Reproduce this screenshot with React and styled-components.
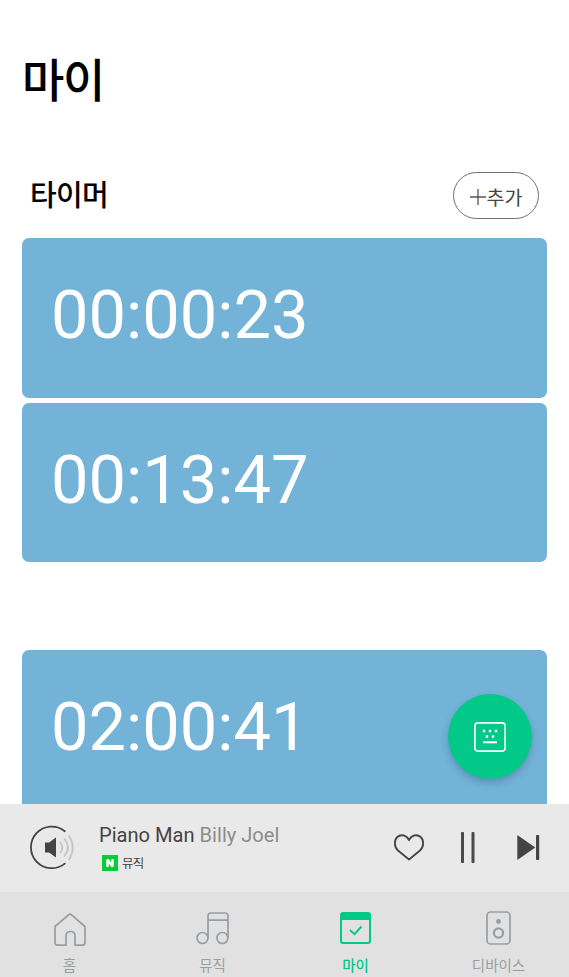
import React from "react";
import styled, { createGlobalStyle } from "styled-components";

const GlobalStyle = createGlobalStyle`
  * { box-sizing: border-box; }
  html, body { margin: 0; padding: 0; overflow: hidden; background: #fff; }
  button { border: 0; padding: 0; margin: 0; background: none; font: inherit; color: inherit; }
  svg { display: block; overflow: visible; }
`;

const Screen = styled.div`
  position: relative;
  display: flex;
  flex-direction: column;
  width: 569px;
  height: 977px;
  overflow: hidden;
  background: #fff;
  font-family: Roboto, "Noto Sans CJK KR", sans-serif;
`;

const Content = styled.main`
  height: 804px;
  overflow: hidden;
  padding: 0 22px;
`;

const PageTitle = styled.h1`
  margin: 43px 0 0;
  height: 68px;
  line-height: 68px;
  font-family: "Noto Sans CJK KR", sans-serif;
  font-size: 46px;
  font-weight: 500;
  letter-spacing: -1.2px;
  color: #000;
`;

const SectionHeader = styled.header`
  display: flex;
  align-items: center;
  justify-content: space-between;
  margin-top: 61px;
  height: 47px;
  padding: 0 8px 0 8px;
`;

const SectionTitle = styled.h2`
  margin: 0 0 5px;
  font-family: "Noto Sans CJK KR", sans-serif;
  font-size: 29px;
  line-height: 42px;
  font-weight: 500;
  letter-spacing: -0.7px;
  color: #000;
`;

const AddButton = styled.button`
  display: flex;
  align-items: center;
  justify-content: center;
  gap: 1px;
  width: 86px;
  height: 47px;
  padding-top: 3px;
  border: 1px solid #707070;
  border-radius: 24px;
  font-family: "Noto Sans CJK KR", sans-serif;
  font-size: 19.5px;
  line-height: 24px;
  letter-spacing: 0;
  color: #444;
`;

const TimerList = styled.div`
  display: flex;
  flex-direction: column;
  gap: 5px;
  margin-top: ${(p) => p.$gap}px;
`;

const TimerCard = styled.article`
  height: 159.5px;
  padding: 38px 29px 0;
  border-radius: 7px;
  background: #73b3d8;
  color: #fff;
  font-size: 66.8px;
  line-height: 79px;
`;

const Fab = styled.button`
  position: absolute;
  left: 448px;
  top: 694px;
  display: grid;
  place-items: center;
  width: 84px;
  height: 85px;
  border-radius: 50%;
  background: #03c988;
  box-shadow: 0 4px 7px rgba(40, 70, 110, 0.3);
`;

const Player = styled.section`
  display: flex;
  align-items: flex-start;
  height: 88px;
  padding: 0 29px 0 30px;
  background: #e9e9e9;
`;

const VolumeButton = styled.button`
  margin-top: 22px;
`;

const Track = styled.div`
  flex: 1;
  padding: 18px 0 0 25px;
`;

const TrackTitle = styled.div`
  font-size: 20.1px;
  line-height: 26px;
  white-space: nowrap;
  color: #444;
`;

const Artist = styled.span`
  color: #8c8c8c;
`;

const Source = styled.div`
  display: flex;
  align-items: center;
  gap: 4px;
  margin: 7px 0 0 3px;
  height: 16px;
  font-family: "Noto Sans CJK KR", sans-serif;
  font-size: 12.5px;
  line-height: 16px;
  letter-spacing: -0.8px;
  color: #444;
`;

const Controls = styled.div`
  display: flex;
  align-items: center;
  height: 87px;
`;

const ControlButton = styled.button`
  margin-left: ${(p) => p.$space}px;
`;

const TabBar = styled.nav`
  display: grid;
  grid-template-columns: repeat(4, 1fr);
  width: 572px;
  height: 85px;
  margin-left: -2px;
  background: #e1e1e1;
`;

const Tab = styled.button`
  display: flex;
  flex-direction: column;
  align-items: center;
  padding-top: 17px;
  color: ${(p) => (p.$active ? "#03c988" : "#999ea3")};
`;

const TabIcon = styled.span`
  display: grid;
  place-items: center;
  width: 36px;
  height: 38px;
`;

const TabLabel = styled.span`
  margin-top: 8px;
  font-family: "Noto Sans CJK KR", sans-serif;
  font-size: 14.5px;
  line-height: 20px;
  font-weight: ${(p) => (p.$active ? 500 : 400)};
`;

const PlusIcon = () => (
  <svg width="16" height="16" viewBox="0 0 16 16" fill="none" stroke="#555" strokeWidth="1.3">
    <path d="M8 0v16M0 8h16" />
  </svg>
);

const KeyboardIcon = () => (
  <svg width="32" height="30" viewBox="0 0 32 30" fill="none" stroke="#fff" strokeWidth="1.6">
    <rect x=".9" y=".9" width="30.2" height="28.2" rx="3" />
    <path d="M9 20.3h14" strokeWidth="2" />
    <g fill="#fff" stroke="none">
      <path d="M8.8 7.8h2.4v2.4H8.8zM14.8 7.8h2.4v2.4h-2.4zM20.8 7.8h2.4v2.4h-2.4zM11.8 13.3h2.4v2.4h-2.4zM17.8 13.3h2.4v2.4h-2.4z" />
    </g>
  </svg>
);

const VolumeIcon = () => (
  <svg width="44" height="44" viewBox="0 0 44 44" fill="none" strokeLinecap="round">
    <path d="M34.8 5.2A20.8 20.8 0 1 0 34.8 37.6" stroke="#444" strokeWidth="1.8" />
    <path d="M15 16.500h4l7-5v20l-7-5h-4z" fill="#444" />
    <g stroke="#c6c6c6" strokeWidth="1.8">
      <path d="M30.500 16.500q3.500 5 0 10" />
      <path d="M34.500 13q7 8.500 0 17" />
      <path d="M39 10q7.500 11.500 0 23.500" />
    </g>
  </svg>
);

const NaverMark = () => (
  <svg width="16" height="16" viewBox="0 0 16 16">
    <path fill="#02ce3c" d="M0 0h16v16H0z" />
    <path d="M5.500 12V4.500l5 7V4" fill="none" stroke="#fff" strokeWidth="2.500" strokeLinejoin="bevel" />
  </svg>
);

const HeartIcon = () => (
  <svg width="30" height="27" viewBox="0 0 30 27" fill="none" stroke="#444" strokeWidth="1.800" strokeLinejoin="round">
    <path d="M15 25.500L4 16.500C-.2 12.500 .1 6 3.300 3 7-.2 12.400 1.100 15 6.200 17.600 1.100 23 -.2 26.700 3c3.200 3 3.500 9.500-.7 13.500z" />
  </svg>
);

const PauseIcon = () => (
  <svg width="14" height="31" viewBox="0 0 14 31" fill="#4a4a4a">
    <rect x="0" width="3" height="31" rx=".8" />
    <rect x="10.500" width="3" height="31" rx=".8" />
  </svg>
);

const NextIcon = () => (
  <svg width="23" height="25" viewBox="0 0 23 25" fill="#444">
    <path d="M.3.8Q.3 0 1 .5L18.300 12.500 1 24.500Q.3 25 .3 24.200z" />
    <rect x="19" width="3.200" height="25" rx=".8" />
  </svg>
);

const HomeIcon = () => (
  <svg width="32" height="34" viewBox="0 -2 32 34" fill="none" stroke="currentColor" strokeWidth="1.700" strokeLinejoin="round">
    <path d="M14.800 1.700q1.200-1 2.400 0L31 13.500V29.800q0 2.300-2.300 2.300h-7.700V23q0-4.500-4.500-4.500t-4.500 4.500v9.100H3.300Q1 32.100 1 29.800V13.500z" />
  </svg>
);

const MusicIcon = () => (
  <svg width="33" height="33" viewBox="0 0 33 33" fill="none" stroke="currentColor" strokeWidth="1.700">
    <circle cx="6.500" cy="26" r="5.500" />
    <circle cx="26.400" cy="26" r="5.500" />
    <path d="M12 26V4q0-3 3-3h14q3 0 3 3v22M12 8.200h20" />
  </svg>
);

const CalendarIcon = () => (
  <svg width="31" height="32" viewBox="0 0 31 32" fill="none" stroke="currentColor">
    <rect x="1" y="1" width="29" height="30" rx="2" strokeWidth="2" />
    <path d="M1 3q0-2 2-2h25q2 0 2 2v5H1z" fill="currentColor" stroke="none" />
    <path d="M10 18l4.500 4.200 7-7.700" strokeWidth="2" />
  </svg>
);

const SpeakerIcon = () => (
  <svg width="25" height="34" viewBox="0 0 25 34" fill="none" stroke="currentColor" strokeWidth="1.700">
    <rect x="1" y="1" width="23" height="32" rx="3.500" />
    <circle cx="12.500" cy="10.500" r="2.400" fill="currentColor" stroke="none" />
    <circle cx="12.500" cy="22" r="4.600" strokeWidth="2.200" />
  </svg>
);

const timerGroups = [
  { gap: 19, timers: ["00:00:23", "00:13:47"] },
  { gap: 88, timers: ["02:00:41"] },
];

const tabs = [
  { label: "홈", Icon: HomeIcon },
  { label: "뮤직", Icon: MusicIcon },
  { label: "마이", Icon: CalendarIcon, active: true },
  { label: "디바이스", Icon: SpeakerIcon },
];

export default function App() {
  return (
    <Screen>
      <GlobalStyle />
      <Content>
        <PageTitle>마이</PageTitle>
        <SectionHeader>
          <SectionTitle>타이머</SectionTitle>
          <AddButton><PlusIcon />추가</AddButton>
        </SectionHeader>
        {timerGroups.map((group) => (
          <TimerList key={group.gap} $gap={group.gap}>
            {group.timers.map((time) => <TimerCard key={time}>{time}</TimerCard>)}
          </TimerList>
        ))}
      </Content>
      <Fab aria-label="키보드"><KeyboardIcon /></Fab>
      <Player>
        <VolumeButton aria-label="음량"><VolumeIcon /></VolumeButton>
        <Track>
          <TrackTitle>Piano Man <Artist>Billy Joel</Artist></TrackTitle>
          <Source><NaverMark />뮤직</Source>
        </Track>
        <Controls>
          <ControlButton $space={0} aria-label="좋아요"><HeartIcon /></ControlButton>
          <ControlButton $space={37} aria-label="일시정지"><PauseIcon /></ControlButton>
          <ControlButton $space={42} aria-label="다음"><NextIcon /></ControlButton>
        </Controls>
      </Player>
      <TabBar>
        {tabs.map(({ label, Icon, active }) => (
          <Tab key={label} $active={active}>
            <TabIcon><Icon /></TabIcon>
            <TabLabel $active={active}>{label}</TabLabel>
          </Tab>
        ))}
      </TabBar>
    </Screen>
  );
}
